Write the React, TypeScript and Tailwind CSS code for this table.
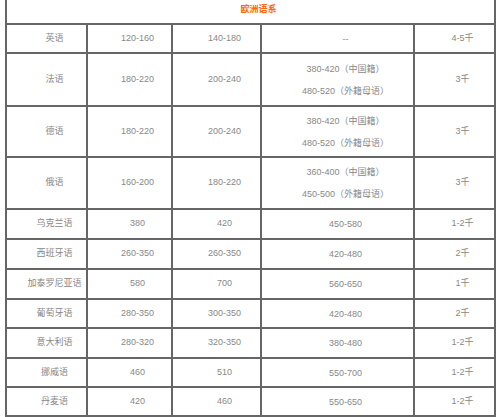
type Row = {
  name: string;
  a: string;
  b: string;
  c: string[];
  d: string;
  h: string;
};

const rows: Row[] = [
  { name: "英语", a: "120-160", b: "140-180", c: ["--"], d: "4-5千", h: "h-[29px]" },
  { name: "法语", a: "180-220", b: "200-240", c: ["380-420（中国籍）", "480-520（外籍母语）"], d: "3千", h: "h-[53px]" },
  { name: "德语", a: "180-220", b: "200-240", c: ["380-420（中国籍）", "480-520（外籍母语）"], d: "3千", h: "h-[51px]" },
  { name: "俄语", a: "160-200", b: "180-220", c: ["360-400（中国籍）", "450-500（外籍母语）"], d: "3千", h: "h-[52px]" },
  { name: "乌克兰语", a: "380", b: "420", c: ["450-580"], d: "1-2千", h: "h-[30px]" },
  { name: "西班牙语", a: "260-350", b: "260-350", c: ["420-480"], d: "2千", h: "h-[30px]" },
  { name: "加泰罗尼亚语", a: "580", b: "700", c: ["560-650"], d: "1千", h: "h-[30px]" },
  { name: "葡萄牙语", a: "280-350", b: "300-350", c: ["420-480"], d: "2千", h: "h-[29px]" },
  { name: "意大利语", a: "280-320", b: "320-350", c: ["380-480"], d: "1-2千", h: "h-[30px]" },
  { name: "挪威语", a: "460", b: "510", c: ["550-700"], d: "1-2千", h: "h-[29px]" },
  { name: "丹麦语", a: "420", b: "460", c: ["550-650"], d: "1-2千", h: "h-[29px]" },
];

const cell = "border-r-2 border-b-2 border-[#666] p-0 pl-4 text-center align-middle";

export default function App() {
  return (
    <div className="h-[417px] w-[500px] overflow-hidden bg-white font-['Liberation_Sans','Noto_Sans_CJK_SC',sans-serif] text-[9px] text-[#888]">
      <table className="ml-[5px] w-[491px] table-fixed border-separate border-spacing-0 border-l-2 border-[#666]">
        <colgroup>
          <col className="w-[81px]" />
          <col className="w-[85px]" />
          <col className="w-[89px]" />
          <col className="w-[153px]" />
          <col className="w-[81px]" />
        </colgroup>
        <thead>
          <tr>
            <th
              colSpan={5}
              className="h-[25px] border-r-2 border-b-2 border-[#666] p-0 pl-4 pt-1 text-center align-top text-[9px] leading-[10px] font-bold text-[#ff6600]"
            >
              欧洲语系
            </th>
          </tr>
        </thead>
        <tbody>
          {rows.map((r) => (
            <tr key={r.name}>
              <td className={`${cell} ${r.h}`}>{r.name}</td>
              <td className={cell}>{r.a}</td>
              <td className={cell}>{r.b}</td>
              <td className={`${cell} leading-[22px]`}>
                {r.c.map((line) => (
                  <div key={line}>{line}</div>
                ))}
              </td>
              <td className={cell}>{r.d}</td>
            </tr>
          ))}
        </tbody>
      </table>
    </div>
  );
}
